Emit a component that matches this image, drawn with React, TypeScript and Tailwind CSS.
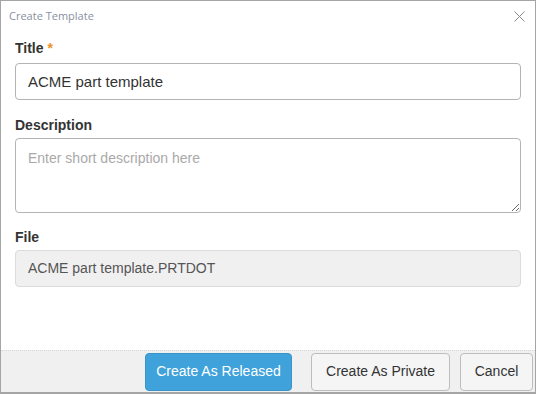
import { useState } from 'react';

export default function App() {
    const [title, setTitle] = useState('ACME part template');
    const [desc, setDesc] = useState('');

    const label = "block h-[20px] leading-[20px] text-[14px] font-bold text-[#333]";

    return (
        <div className="w-[536px] h-[394px] bg-white border border-b-2 border-[#a5a5a5] flex flex-col font-['Liberation_Sans',Arial,sans-serif] overflow-hidden">
            {/* Header */}
            <div className="h-[31px] flex items-center justify-between pl-[8px] pr-[10px] shrink-0">
                <span className="text-[11px] text-[#8b8fa3] font-['Open_Sans',sans-serif]">Create Template</span>
                <button className="w-[12px] h-[12px] flex items-center justify-center">
                    <svg width="11" height="11" viewBox="0 0 11 11" fill="none" stroke="#8c8c8c" strokeWidth="1">
                        <path d="M0.5 0.5 L10.5 10.5 M10.5 0.5 L0.5 10.5" />
                    </svg>
                </button>
            </div>

            {/* Body */}
            <div className="flex-1 px-[14px] pt-[6px]">
                <label className={label}>
                    Title <span className="text-[#f0901e]">*</span>
                </label>
                <input
                    value={title}
                    onChange={e => setTitle(e.target.value)}
                    className="mt-[5px] w-full h-[37px] border border-[#b3b3b3] rounded-[4px] px-[12px] text-[15px] text-[#333] outline-none"
                />

                <label className={`${label} mt-[15px]`}>Description</label>
                <textarea
                    value={desc}
                    onChange={e => setDesc(e.target.value)}
                    placeholder="Enter short description here"
                    className="block mt-[3px] w-full h-[75px] border border-[#b3b3b3] rounded-[4px] px-[12px] py-[9px] text-[14px] text-[#333] placeholder:text-[#a9a9a9] outline-none"
                />

                <label className={`${label} mt-[14px]`}>File</label>
                <div className="mt-[3px] w-full h-[37px] bg-[#f0f0f0] border border-[#dcdcdc] rounded-[4px] px-[12px] flex items-center text-[14px] text-[#555]">
                    ACME part template.PRTDOT
                </div>
            </div>

            {/* Footer */}
            <div className="h-[42px] shrink-0 bg-[#f0f0f0] border-t border-dotted border-[#d6d6d6] flex items-center justify-end pr-[2px]">
                <button className="h-[38px] w-[147px] rounded-[4px] bg-[#3fa2db] border border-[#3a94c9] text-white text-[14px]">
                    Create As Released
                </button>
                <button className="ml-[19px] h-[38px] w-[139px] rounded-[4px] bg-[#f5f5f5] border border-[#bdbdbd] text-[#333] text-[14px]">
                    Create As Private
                </button>
                <button className="ml-[10px] h-[38px] w-[73px] rounded-[4px] bg-[#f5f5f5] border border-[#bdbdbd] text-[#333] text-[14px]">
                    Cancel
                </button>
            </div>
        </div>
    );
}
